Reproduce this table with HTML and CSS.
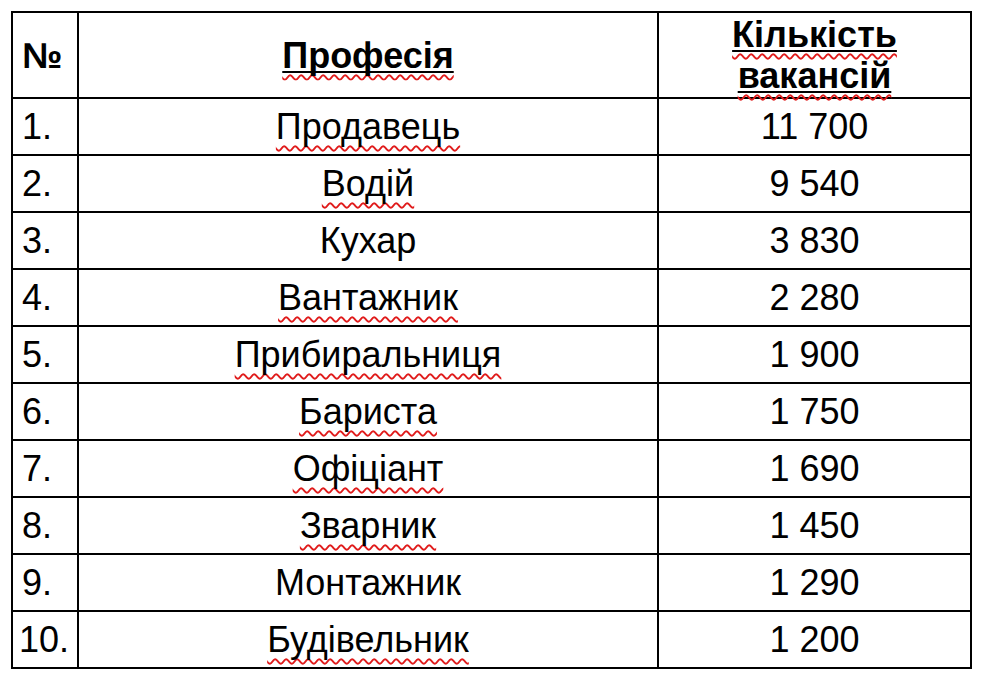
FILE: index.html
```html
<!DOCTYPE html>
<html lang="uk">
<head>
<meta charset="utf-8">
<title>Вакансії</title>
<link rel="stylesheet" href="styles.css">
</head>
<body>
<table class="jobs">
  <colgroup>
    <col class="c-num">
    <col class="c-prof">
    <col class="c-count">
  </colgroup>
  <thead>
    <tr class="head-row">
      <th class="num">№</th>
      <th><span class="ul"><span class="sp">Професія</span></span></th>
      <th><span class="ul"><span class="sp">Кількість</span></span><br><span class="ul"><span class="sp">вакансій</span></span></th>
    </tr>
  </thead>
  <tbody>
    <tr><td class="num">1.</td><td><span class="sp">Продавець</span></td><td>11 700</td></tr>
    <tr><td class="num">2.</td><td><span class="sp">Водій</span></td><td>9 540</td></tr>
    <tr><td class="num">3.</td><td>Кухар</td><td>3 830</td></tr>
    <tr><td class="num">4.</td><td><span class="sp">Вантажник</span></td><td>2 280</td></tr>
    <tr><td class="num">5.</td><td><span class="sp">Прибиральниця</span></td><td>1 900</td></tr>
    <tr><td class="num">6.</td><td><span class="sp">Бариста</span></td><td>1 750</td></tr>
    <tr><td class="num">7.</td><td><span class="sp">Офіціант</span></td><td>1 690</td></tr>
    <tr><td class="num">8.</td><td><span class="sp">Зварник</span></td><td>1 450</td></tr>
    <tr><td class="num">9.</td><td>Монтажник</td><td>1 290</td></tr>
    <tr><td class="num ten">10.</td><td><span class="sp">Будівельник</span></td><td>1 200</td></tr>
  </tbody>
</table>
</body>
</html>
```

FILE: styles.css
```css
html, body {
  margin: 0;
  padding: 0;
  background: #ffffff;
}

body {
  padding: 11px 0 0 11px;
  font-family: "Liberation Sans", Arial, sans-serif;
  color: #000000;
}

.jobs {
  border-collapse: collapse;
  table-layout: fixed;
  width: 959px;
  font-size: 36px;
  line-height: 41px;
}

.c-num { width: 66px; }
.c-prof { width: 580px; }
.c-count { width: 313px; }

.jobs th,
.jobs td {
  border: 2px solid #000000;
  padding: 0;
  text-align: center;
  vertical-align: middle;
  white-space: nowrap;
}

.jobs th {
  font-weight: bold;
}

.head-row {
  height: 86px;
}

.jobs tbody tr {
  height: 57px;
}

.jobs .num {
  text-align: left;
  padding-left: 9px;
}

.jobs .ten {
  padding-left: 6px;
}

.ul {
  text-decoration: underline #000000;
  text-decoration-thickness: 2px;
  text-underline-offset: 3px;
}

.sp {
  text-decoration: underline wavy #e01b1b;
  text-decoration-thickness: 1.5px;
  text-underline-offset: 6px;
  text-decoration-skip-ink: none;
}
```
